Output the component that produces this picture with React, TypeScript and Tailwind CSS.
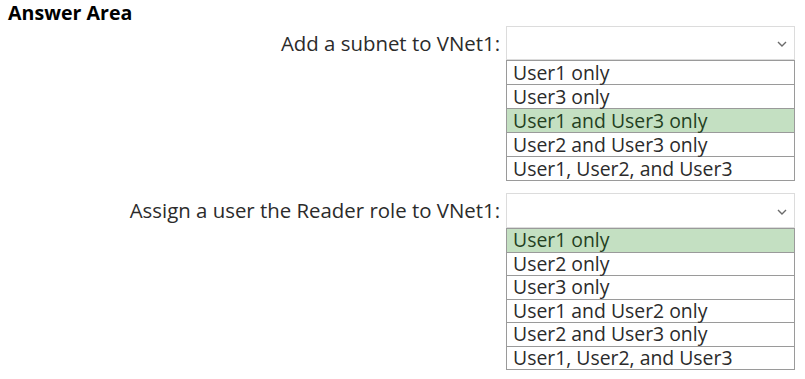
const groups = [
  {
    label: "Add a subnet to VNet1:",
    rowH: "h-[24px]",
    headH: "h-[34px]",
    options: [
      "User1 only",
      "User3 only",
      "User1 and User3 only",
      "User2 and User3 only",
      "User1, User2, and User3",
    ],
    picked: 2,
  },
  {
    label: "Assign a user the Reader role to VNet1:",
    rowH: "h-[23.5px]",
    headH: "h-[35px]",
    options: [
      "User1 only",
      "User2 only",
      "User3 only",
      "User1 and User2 only",
      "User2 and User3 only",
      "User1, User2, and User3",
    ],
    picked: 0,
  },
];

function Chevron() {
  return (
    <svg width="10" height="6" viewBox="0 0 10 6" className="text-[#6b6b6b]">
      <path d="M1 1l4 4 4-4" fill="none" stroke="currentColor" strokeWidth="1.4" />
    </svg>
  );
}

export default function App() {
  return (
    <div className="w-[805px] h-[379px] bg-white font-['Open_Sans',sans-serif] text-[#2b2b2b] overflow-hidden">
      <div className="pl-[8px] pt-[1px] h-[26px] text-[19.6px] font-bold text-black leading-[24px]">
        Answer Area
      </div>
      <div className="flex flex-col gap-[12px]">
        {groups.map((g) => (
          <div key={g.label} className="grid grid-cols-[1fr_289px] gap-x-[6px] pr-[10px]">
            <div className={`${g.headH} flex items-center justify-end text-[20.4px]`}>{g.label}</div>
            <div className="flex flex-col">
              <div className={`${g.headH} border border-[#dcdcdc] flex items-center justify-end pr-[7px] pt-[2px]`}>
                <Chevron />
              </div>
              <div className="border-x border-b border-[#9a9a9a]">
                {g.options.map((o, i) => (
                  <div
                    key={o}
                    className={`${g.rowH} border-t border-[#9a9a9a] flex items-center pl-[6px] text-[19.4px] leading-[22px] ${
                      i === g.picked ? "bg-[#c4e0c2] text-[#24401f]" : ""
                    }`}
                  >
                    {o}
                  </div>
                ))}
              </div>
            </div>
          </div>
        ))}
      </div>
    </div>
  );
}
